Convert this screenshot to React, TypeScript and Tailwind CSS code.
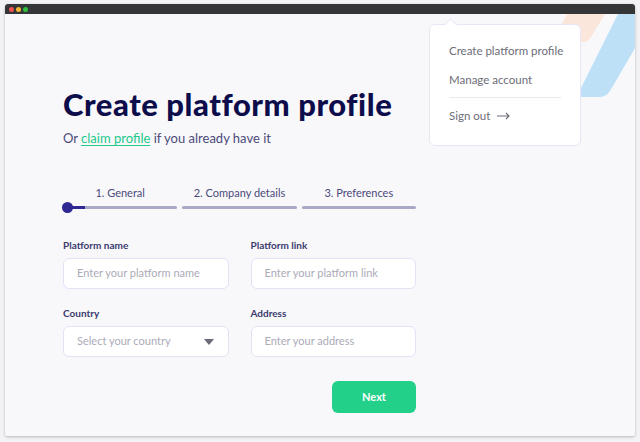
import React from 'react';

const font = { fontFamily: '"Lato", "Open Sans", sans-serif' };

const Field = ({ label, placeholder, select }: { label: string; placeholder: string; select?: boolean }) => (
  <div className="flex flex-col">
    <label className="text-[10px] font-bold text-[#3b3a6e] leading-none mb-[8px]">{label}</label>
    <div className="h-[31px] bg-white border border-[#e2e2f7] rounded-[6px] flex items-center justify-between pl-[13px] pr-[14px]">
      <span className="text-[11px] text-[#ababb8]">{placeholder}</span>
      {select && (
        <svg width="10" height="6" viewBox="0 0 10 6">
          <path d="M0 0h10L5 6z" fill="#6b6b78" />
        </svg>
      )}
    </div>
  </div>
);

const Dropdown = () => (
  <div className="absolute left-[424px] top-[10px] w-[152px] h-[122px] bg-white border border-[#e6e6f6] rounded-[6px] px-[19px] pt-[20px] whitespace-nowrap">
    <div className="absolute -top-[5px] left-[16px] w-[9px] h-[9px] bg-white border-l border-t border-[#e6e6f6] rotate-45" />
    <div className="text-[11.5px] text-[#6d6d78] leading-none">Create platform profile</div>
    <div className="text-[11.5px] text-[#6d6d78] leading-none mt-[17px]">Manage account</div>
    <div className="h-px bg-[#e8e8ee] w-[112px] mt-[12px]" />
    <div className="text-[11.5px] text-[#6d6d78] leading-none mt-[12px] flex items-center gap-[7px]">
      Sign out
      <svg width="13" height="8" viewBox="0 0 13 8" fill="none" stroke="#6d6d78" strokeWidth="1.1">
        <path d="M0 4h12M9 1l3 3-3 3" />
      </svg>
    </div>
  </div>
);

const Step = ({ label, active }: { label: string; active?: boolean }) => (
  <div className="flex-1 flex flex-col items-center">
    <span className="text-[11px] text-[#4b4a7a] leading-none mb-[8px]">{label}</span>
    <div className="relative w-full h-[3px] bg-[#a9a8c7] rounded-full">
      {active && (
        <>
          <div className="absolute left-0 top-0 h-[3px] w-[22px] bg-[#2e2890]" />
          <div className="absolute -left-[1px] -top-[4px] w-[11px] h-[11px] rounded-full bg-[#2e2890]" />
        </>
      )}
    </div>
  </div>
);

export default function App() {
  return (
    <div className="w-[640px] h-[442px] bg-[#f3f3f5] pt-[4px] px-[5px]" style={font}>
      <div className="w-[630px] h-[432px] flex flex-col rounded-[3px] overflow-hidden shadow-[0_1px_3px_rgba(0,0,0,0.25)]">
        <div className="h-[10px] bg-[#353638] flex items-center gap-[2px] pl-[4px]">
          <span className="w-[5px] h-[5px] rounded-full bg-[#f0524f]" />
          <span className="w-[5px] h-[5px] rounded-full bg-[#f5b731]" />
          <span className="w-[5px] h-[5px] rounded-full bg-[#2cc23f]" />
        </div>
        <div className="relative flex-1 bg-[#f8f8fb] overflow-hidden">
          <svg className="absolute right-0 top-0" width="90" height="90" viewBox="0 0 90 90">
            <path d="M22 0H60L46 23Q43 28 38 28H12Q7 28 10 23z" fill="#fbe6dc" />
            <path d="M73 0H110L65 77Q61 83 54 83H40Q31 83 35 76z" fill="#bde0f7" />
          </svg>
          <Dropdown />
          <div className="pl-[58px] pt-[75px] w-[411px]">
            <h1 className="text-[31px] font-black text-[#0e0d4b] leading-none tracking-[0.55px]">Create platform profile</h1>
            <p className="text-[13px] text-[#4b4a7a] mt-[12px] leading-none">
              Or <a className="text-[#22c98a] underline underline-offset-2">claim profile</a> if you already have it
            </p>
            <div className="flex gap-[5px] mt-[42px]">
              <Step label="1. General" active />
              <Step label="2. Company details" />
              <Step label="3. Preferences" />
            </div>
            <div className="grid grid-cols-2 gap-x-[22px] gap-y-[19px] mt-[31px]">
              <Field label="Platform name" placeholder="Enter your platform name" />
              <Field label="Platform link" placeholder="Enter your platform link" />
              <Field label="Country" placeholder="Select your country" select />
              <Field label="Address" placeholder="Enter your address" />
            </div>
            <div className="flex justify-end mt-[24px]">
              <button className="w-[84px] h-[32px] rounded-[6px] bg-[#22d08a] text-white text-[11px] font-bold">Next</button>
            </div>
          </div>
        </div>
      </div>
    </div>
  );
}
